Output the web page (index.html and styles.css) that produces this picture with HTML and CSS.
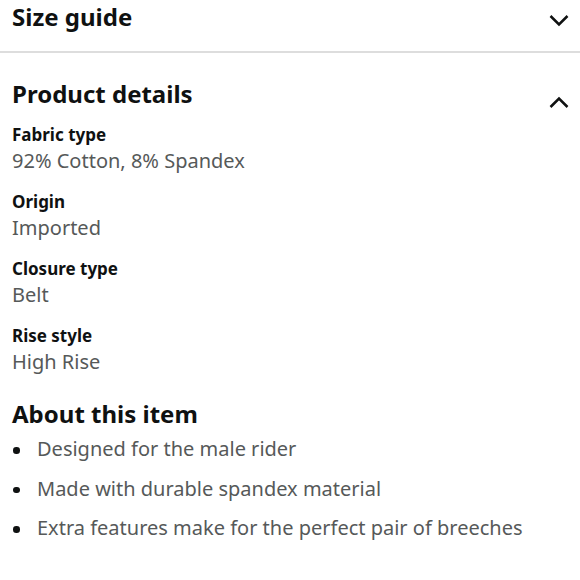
FILE: index.html
```html
<!DOCTYPE html>
<html>
<head>
<meta charset="utf-8">
<link rel="stylesheet" href="styles.css">
</head>
<body>
<div class="page">
  <div class="section-head collapsed">
    <h2 class="title">Size guide</h2>
    <svg class="chev chev-down" width="20" height="13" viewBox="0 0 20 13"><path d="M1.5 2 L10 10.5 L18.5 2" fill="none" stroke="#0f1111" stroke-width="2.5"/></svg>
  </div>
  <div class="divider"></div>
  <div class="section-head expanded">
    <h2 class="title">Product details</h2>
    <svg class="chev chev-up" width="20" height="13" viewBox="0 0 20 13"><path d="M1.5 11 L10 2.5 L18.5 11" fill="none" stroke="#0f1111" stroke-width="2.5"/></svg>
  </div>
  <dl class="details">
    <div class="row"><dt>Fabric type</dt><dd>92% Cotton, 8% Spandex</dd></div>
    <div class="row"><dt>Origin</dt><dd>Imported</dd></div>
    <div class="row"><dt>Closure type</dt><dd>Belt</dd></div>
    <div class="row"><dt>Rise style</dt><dd>High Rise</dd></div>
  </dl>
  <h2 class="title about">About this item</h2>
  <ul class="bullets">
    <li>Designed for the male rider</li>
    <li>Made with durable spandex material</li>
    <li>Extra features make for the perfect pair of breeches</li>
  </ul>
</div>
</body>
</html>
```
FILE: styles.css
```css
html, body { margin: 0; padding: 0; background: #fff; }
body { font-family: "Noto Sans", "Liberation Sans", sans-serif; color: #0f1111; }
.page { padding: 0 11px 0 12px; }
.section-head { display: flex; justify-content: space-between; align-items: flex-start; box-sizing: border-box; }
.collapsed { height: 35px; padding-top: 2px; }
.expanded { height: 41px; margin-top: 20px; padding-top: 6px; }
.title { margin: 0; font-size: 24px; line-height: 30px; font-weight: 700; }
.chev-down { margin-top: 12px; }
.chev-up { margin-top: 17px; }
.divider { height: 2px; background: #dddddd; margin: 16px -11px 0 -12px; }
.details { margin: 9px 0 0; }
.row { margin-bottom: 15px; }
.row:last-child { margin-bottom: 0; }
dt { font-size: 17px; font-weight: 700; line-height: 24px; }
dd { margin: 0; font-size: 20px; line-height: 28px; color: #565959; }
.about { margin-top: 23px; }
.bullets { list-style: none; margin: 6px 0 0; padding: 0; }
.bullets li { position: relative; padding-left: 25px; font-size: 20px; line-height: 28px; color: #565959; margin-bottom: 11.5px; }
.bullets li::before { content: ""; position: absolute; left: 1px; top: 12px; width: 6.5px; height: 6.5px; border-radius: 50%; background: #0f1111; }
```
